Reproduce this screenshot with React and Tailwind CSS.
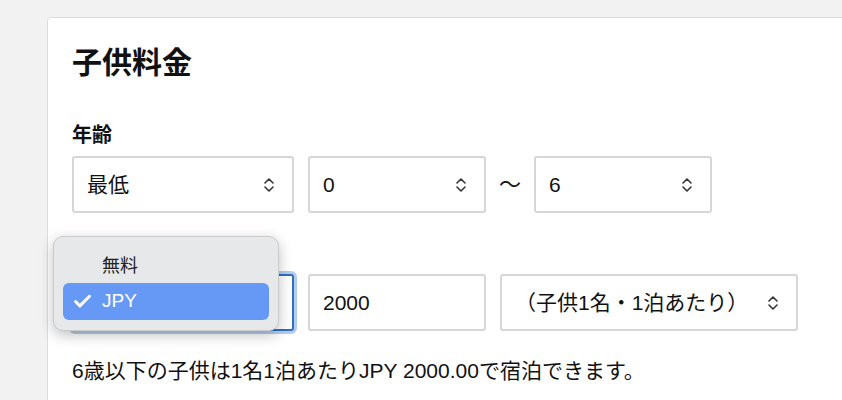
import { Check } from 'lucide-react'

const font = { fontFamily: '"Liberation Sans", "Noto Sans CJK JP", sans-serif' }

function Chevrons() {
  return (
    <svg width="12" height="18" viewBox="0 0 12 18" fill="none" stroke="#333" strokeWidth="1.6" strokeLinecap="round" strokeLinejoin="round">
      <path d="M2 7 L6 3 L10 7" />
      <path d="M2 11 L6 15 L10 11" />
    </svg>
  )
}

function Select({ value, className = '' }) {
  return (
    <div
      className={`h-[57px] flex items-center justify-between pl-[13px] pr-[17px] border-2 border-[#d6d6d6] rounded-[3px] bg-white text-[21px] text-[#111] ${className}`}
    >
      <span>{value}</span>
      <Chevrons />
    </div>
  )
}

export default function App() {
  return (
    <div className="w-[842px] h-[400px] overflow-hidden bg-[#f2f2f2]" style={font}>
      <div className="ml-[47px] mt-[17px] w-[820px] h-[420px] bg-white border border-[#dcdcdc] rounded-tl-[4px] pl-6 pt-[27px]">
        <h1 className="text-[30px] leading-[36px] font-bold text-[#111]">子供料金</h1>

        <div className="mt-[40px] text-[20px] leading-[28px] font-bold text-[#111]">年齢</div>
        <div className="mt-[7px] flex items-center">
          <Select value="最低" className="w-[222px]" />
          <Select value="0" className="w-[178px] ml-[14px]" />
          <span className="w-[48px] text-center text-[22px] text-[#111]">〜</span>
          <Select value="6" className="w-[178px]" />
        </div>

        {/* label row hidden behind the open menu */}
        <div className="mt-[27px] h-[28px]" />
        <div className="relative mt-[6px] flex items-center">
          <div className="w-[222px] h-[57px] border-2 border-[#2f6fc4] rounded-[3px] ring-[3px] ring-[#b5cdec] bg-white" />
          <div className="w-[178px] h-[57px] ml-[14px] flex items-center pl-[13px] border-2 border-[#d6d6d6] rounded-[3px] text-[21px] text-[#111]">
            2000
          </div>
          <Select value="（子供1名・1泊あたり）" className="w-[298px] ml-[14px] pl-[4px]" />

          <div className="absolute left-[-19px] top-[-38px] w-[226px] h-[95px] rounded-[10px] bg-[#e6e8e9] border border-[#c9cbcc] shadow-[0_4px_14px_rgba(0,0,0,0.25)] px-[9px] pt-[12px]">
            <div className="h-[34px] flex items-center pl-[39px] text-[18px] text-[#222]">無料</div>
            <div className="h-[37px] flex items-center rounded-[6px] bg-[#6699f5] text-white">
              <Check className="ml-[9px] w-[21px] h-[21px]" strokeWidth={3.4} />
              <span className="ml-[9px] text-[19px]">JPY</span>
            </div>
          </div>
        </div>

        <p className="mt-[26px] text-[21px] leading-[28px] text-[#111]">
          6歳以下の子供は1名1泊あたりJPY 2000.00で宿泊できます。
        </p>
      </div>
    </div>
  )
}
